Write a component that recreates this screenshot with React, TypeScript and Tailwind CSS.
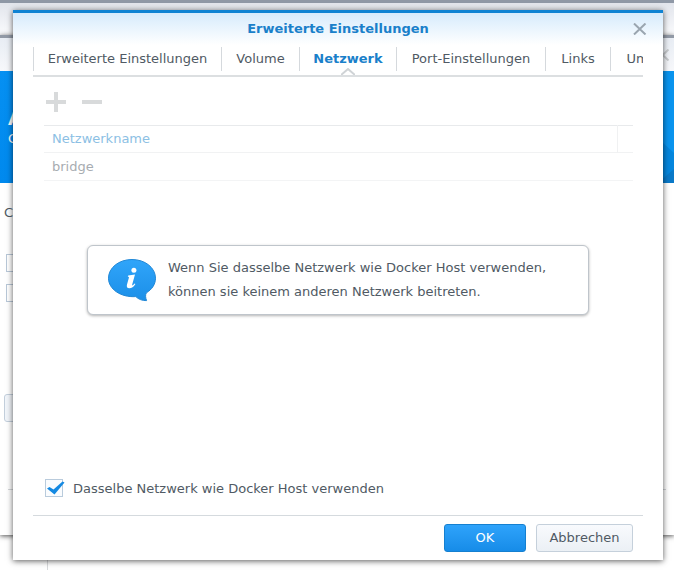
import React, { useState } from 'react';

const tabs = [
    { label: 'Erweiterte Einstellungen', width: 'w-[188px]' },
    { label: 'Volume', width: 'w-[78px]' },
    { label: 'Netzwerk', width: 'w-[97px]' },
    { label: 'Port-Einstellungen', width: 'w-[149px]' },
    { label: 'Links', width: 'w-[65px]' },
    { label: 'Um', width: 'w-[54px]' },
];

const networks = ['bridge'];

const CloseIcon: React.FC = () => (
    <svg width="14" height="12" viewBox="0 0 14 12" fill="none" stroke="currentColor" strokeWidth="2">
        <path d="M1 0.5L12.5 11.5M12.5 0.5L1 11.5" />
    </svg>
);

const InfoIcon: React.FC = () => (
    <svg width="48" height="43" viewBox="0 0 48 43" className="shrink-0">
        <defs>
            <linearGradient id="bubble" x1="0" y1="0" x2="0" y2="1">
                <stop offset="0" stopColor="#30a5fa" />
                <stop offset="1" stopColor="#1b8fe8" />
            </linearGradient>
        </defs>
        <path
            d="M24 0.5C37.2 0.5 47.5 8.8 47.5 19.2C47.5 25.4 43.8 30.6 38.4 33.8C37.2 35.4 37.4 39 38.6 41.6C34.6 41.8 30.6 40.4 27.8 37.6C12.5 38.6 0.5 30 0.5 19.2C0.5 8.8 10.8 0.5 24 0.5Z"
            fill="url(#bubble)"
            stroke="#2288d6"
            strokeWidth="1"
        />
        <circle cx="25.9" cy="11.3" r="2.5" fill="#fff" />
        <path
            d="M20.2 16.6L27 15.4L24.2 25.6C24 26.6 24.6 26.6 25.4 25.8L26.6 24.4L27.4 25C25.6 28 23.6 29.2 21.4 29.2C19 29.2 18.4 27.6 19 25.4L20.9 18.8C21.1 18 20.9 17.8 19.8 17.8Z"
            fill="#fff"
        />
    </svg>
);

// Wizard window behind the dialog
const WizardWindow: React.FC = () => (
    <div className="flex min-h-screen flex-col">
        <div className="h-[3px] bg-[#8f98a6]" />
        <div className="h-8 bg-linear-to-b from-[#e2e5ec] to-[#fafbfd]" />
        <div className="bg-white shadow-[0_1px_5px_rgba(0,0,0,0.7)]">
            <div className="flex h-9 items-center justify-end border-t-[3px] border-[#929aa6] bg-linear-to-b from-[#e8edf4] to-[#f7f8fb] pr-1 text-[#c8cbce]">
                <CloseIcon />
            </div>
            <div className="relative flex h-28 flex-col justify-center bg-linear-to-b from-[#0690f2] to-[#0089ee] pl-2 text-white">
                <svg width="24" height="112" viewBox="0 0 24 112" className="absolute top-0 right-0">
                    <path d="M0 0H24V85L0 60Z" fill="#0a94ee" />
                    <path d="M0 60L24 82V112H0Z" fill="#0586dd" />
                    <path d="M8 112L24 98V112Z" fill="#0a79c8" />
                </svg>
                <h1 className="text-[18px] leading-6 font-bold">A</h1>
                <p className="text-[13px] leading-4">C</p>
            </div>
            <div className="flex h-[352px] flex-col pt-5">
                <p className="pl-1 text-[13px] leading-5">C</p>
                <div className="mt-[31px] ml-1.5 h-[18px] w-[18px] border border-[#b9c8d8]" />
                <div className="mt-3 ml-1.5 h-[18px] w-[18px] border border-[#b9c8d8]" />
                <div className="mt-[92px] ml-1 h-7 w-20 rounded-[3px] border border-[#c3cfdc] bg-[#f1f5fa]" />
                <div className="mx-2 mt-[67px] h-px shrink-0 bg-[#d3d6d9]" />
            </div>
        </div>
        <div className="ml-[47px] flex-1 border-l border-[#d8dadc]" />
    </div>
);

const App: React.FC = () => {
    const [activeTab, setActiveTab] = useState('Netzwerk');
    const [sameNetwork, setSameNetwork] = useState(true);

    return (
        <div className="relative bg-white font-['DejaVu_Sans',sans-serif] text-[#505a64]">
            <WizardWindow />

            <div className="absolute inset-0 flex pt-2.5 pr-[11px] pb-2.5 pl-[13px]">
                <div role="dialog" aria-label="Erweiterte Einstellungen" className="flex min-w-0 flex-1 flex-col border-t-[3px] border-[#0f83d3] bg-white bg-linear-to-b from-[#d6ebfc] to-white to-[32px] px-5 shadow-[0_1px_6px_rgba(0,0,0,0.65)]">
                    <header className="grid h-8 grid-cols-[1fr_auto_1fr] items-center">
                        <h2 className="col-start-2 text-[13px] font-bold text-[#1a80ca]">Erweiterte Einstellungen</h2>
                        <button type="button" aria-label="Schließen" className="-mr-1 justify-self-end text-[#9aa5af]">
                            <CloseIcon />
                        </button>
                    </header>

                    {/* Tabs */}
                    <nav className="flex h-8 shrink-0 overflow-hidden border-b-2 border-[#dcdfe1]">
                        {tabs.map(tab => (
                            <button
                                key={tab.label}
                                type="button"
                                onClick={() => setActiveTab(tab.label)}
                                className={`relative flex h-full shrink-0 items-start text-[13px] leading-6 whitespace-nowrap ${tab.width} ${activeTab === tab.label ? 'font-bold text-[#1a80ca]' : ''}`}
                            >
                                <span className="mt-0.5 h-6 w-full border-l border-[#d5d9dd]">
                                    {tab.label}
                                </span>
                                {activeTab === tab.label && (
                                    <svg width="14" height="7" viewBox="0 0 14 7" className="absolute bottom-0 left-1/2 -translate-x-1/2">
                                        <path d="M0 7L7 1L14 7" fill="#fff" stroke="#cfd3d6" strokeWidth="2" />
                                    </svg>
                                )}
                            </button>
                        ))}
                    </nav>

                    {/* Network list */}
                    <div className="flex h-12 items-center gap-4 pt-0.5 pl-[13px] text-[#d8dadb]">
                        <button type="button" aria-label="Hinzufügen">
                            <svg width="20" height="20" viewBox="0 0 20 20" fill="currentColor">
                                <path d="M8 0H12V8H20V12H12V20H8V12H0V8H8Z" />
                            </svg>
                        </button>
                        <button type="button" aria-label="Entfernen">
                            <svg width="20" height="20" viewBox="0 0 20 20" fill="currentColor">
                                <path d="M0 8H20V12H0Z" />
                            </svg>
                        </button>
                    </div>
                    <div className="mr-2.5 ml-[11px]">
                        <table className="w-full border-collapse text-left text-[13px]">
                            <thead>
                                <tr className="h-[27px] border-t border-b border-t-[#e8eaec] border-b-[#f1f2f3]">
                                    <th className="border-r border-[#f0f1f2] px-2 font-normal text-[#8cc0e4]">Netzwerkname</th>
                                    <th className="w-4" />
                                </tr>
                            </thead>
                            <tbody>
                                {networks.map(name => (
                                    <tr key={name} className="h-7 border-b border-[#f3f4f5]">
                                        <td colSpan={2} className="px-2 text-[#a7acb1]">{name}</td>
                                    </tr>
                                ))}
                            </tbody>
                        </table>
                    </div>

                    <div className="mx-[54px] mt-16 flex items-center gap-3 rounded-md border border-[#bfc5cb] bg-white px-5 py-2.5 shadow-[0_1px_3px_rgba(0,0,0,0.3)]">
                        <InfoIcon />
                        <p className="text-[13px] leading-6">
                            Wenn Sie dasselbe Netzwerk wie Docker Host verwenden,
                            <br />
                            können sie keinem anderen Netzwerk beitreten.
                        </p>
                    </div>

                    <label className="mt-auto mb-[17px] flex items-center gap-2.5 pl-3 text-[13px]">
                        <span className="relative flex">
                            <input
                                type="checkbox"
                                checked={sameNetwork}
                                onChange={e => setSameNetwork(e.target.checked)}
                                className="size-[18px] appearance-none border border-[#b9cbdc] bg-[#fafcfe]"
                            />
                            {sameNetwork && (
                                <svg width="18" height="14" viewBox="0 0 18 14" className="pointer-events-none absolute top-0.5 left-0.5">
                                    <path d="M0 7.5L2.5 6L6.5 8.5L15.5 0.5L17.5 1.5L7.5 13.5Z" fill="#1489e2" />
                                </svg>
                            )}
                        </span>
                        Dasselbe Netzwerk wie Docker Host verwenden
                    </label>

                    <footer className="flex justify-end gap-2.5 border-t border-[#d5dade] py-2 pr-2.5 text-[13px]">
                        <button type="button" className="h-7 w-[82px] rounded-[3px] border border-[#1580d0] bg-linear-to-b from-[#2ea3fb] to-[#168ce8] text-white">
                            OK
                        </button>
                        <button type="button" className="h-7 w-[97px] rounded-[3px] border border-[#c5d0db] bg-linear-to-b from-[#f8fafd] to-[#ebf0f5]">
                            Abbrechen
                        </button>
                    </footer>
                </div>
            </div>
        </div>
    );
};

export default App;
